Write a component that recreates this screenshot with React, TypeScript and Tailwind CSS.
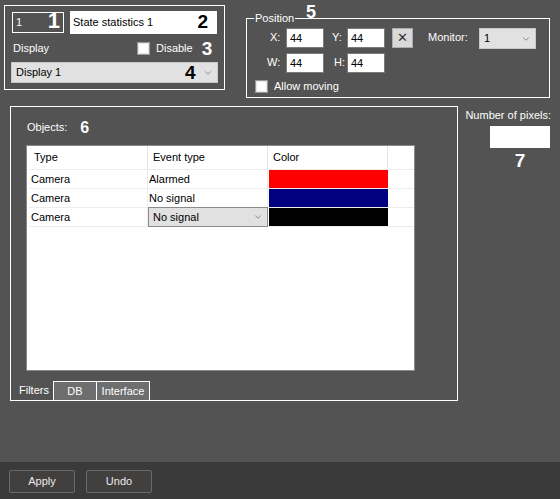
import { ChevronDown } from 'lucide-react';

const FONT = { fontFamily: '"Liberation Sans", Arial, sans-serif' };

function Chevron({ className = '' }: { className?: string }) {
  return <ChevronDown className={`w-[10px] h-[10px] text-[#555] ${className}`} strokeWidth={1.5} />;
}

function Checkbox() {
  return <span className="inline-block w-[13px] h-[13px] bg-white border border-[#9a9a9a] shadow-[inset_0_0_0_1px_#e6e6e6]" />;
}

function NumInput({ value }: { value: string }) {
  return (
    <div className="w-[38px] h-[20px] bg-white border border-[#7a7a7a] text-black pl-[3px] leading-[18px]">
      {value}
    </div>
  );
}

const rows = [
  { type: 'Camera', event: 'Alarmed', color: 'bg-[#ff0000]', editing: false },
  { type: 'Camera', event: 'No signal', color: 'bg-[#000080]', editing: false },
  { type: 'Camera', event: 'No signal', color: 'bg-black', editing: true },
];

export default function App() {
  return (
    <div style={FONT} className="w-[560px] h-[499px] bg-[#535353] text-[11px] text-white flex flex-col overflow-hidden">
      {/* top row */}
      <div className="flex items-start h-[98px]">
        {/* object box */}
        <div className="mt-[5px] ml-[4px] w-[221px] h-[85px] border border-white">
          <div className="flex items-start mt-[5px]">
            <div className="relative ml-[7px] mt-[1px] w-[52px] h-[21px] border border-white pl-[3px] leading-[18px]">
              1
              <span className="absolute right-[3px] top-[-3px] text-[22px] font-bold leading-[22px]">1</span>
            </div>
            <div className="relative ml-[6px] w-[147px] h-[23px] bg-white text-black pl-[3px] leading-[22px]">
              State statistics 1
              <span className="absolute right-[9px] top-[0px] text-[19px] font-bold leading-[22px]">2</span>
            </div>
          </div>
          <div className="flex items-center mt-[8px] h-[13px]">
            <span className="ml-[8px] w-[124px]">Display</span>
            <Checkbox />
            <span className="ml-[6px]">Disable</span>
            <span className="ml-[9px] text-[19px] font-bold leading-[13px]">3</span>
          </div>
          <div className="relative ml-[6px] mt-[7px] w-[207px] h-[21px] bg-[#e1e1e1] border border-[#c8c8c8] text-black pl-[4px] leading-[19px] flex items-center">
            <span>Display 1</span>
            <span className="absolute left-[173px] top-[0px] text-[19px] font-bold leading-[20px]">4</span>
            <Chevron className="ml-auto mr-[4px]" />
          </div>
        </div>

        {/* position box */}
        <div className="relative ml-[21px] mt-[18px] w-[304px] h-[80px] border border-white">
          <span className="absolute left-[7px] top-[-8px] px-[1px] bg-[#535353] leading-[14px]">Position</span>
          <span className="absolute left-[59px] top-[-16px] text-[18px] font-bold leading-[18px]">5</span>
          <div className="flex items-start pt-[9px]">
            <span className="ml-[23px] w-[16px] pt-[1px]">X:</span>
            <NumInput value="44" />
            <span className="ml-[8px] w-[15px] pt-[1px]">Y:</span>
            <NumInput value="44" />
            <div className="ml-[7px] w-[21px] h-[20px] bg-[#d9d9d9] border border-[#adadad] text-[#333] flex items-center justify-center text-[13px]">
              ✕
            </div>
            <span className="ml-[15px] w-[51px] pt-[1px]">Monitor:</span>
            <div className="w-[57px] h-[21px] bg-[#e1e1e1] border border-[#c8c8c8] text-black pl-[4px] flex items-center">
              <span>1</span>
              <Chevron className="ml-auto mr-[4px]" />
            </div>
          </div>
          <div className="flex items-start mt-[4px]">
            <span className="ml-[20px] w-[19px] pt-[1px]">W:</span>
            <NumInput value="44" />
            <span className="ml-[10px] w-[13px] pt-[1px]">H:</span>
            <NumInput value="44" />
          </div>
          <div className="flex items-center mt-[5px] ml-[8px]">
            <Checkbox />
            <span className="ml-[6px]">Allow moving</span>
          </div>
        </div>
      </div>

      {/* main row */}
      <div className="flex items-start mt-[8px]">
        <div className="ml-[10px] w-[448px] h-[295px] border border-white flex flex-col">
          <div className="flex items-center pl-[16px] pt-[13px] h-[28px]">
            <span>Objects:</span>
            <span className="ml-[13px] text-[16px] font-bold">6</span>
          </div>
          <div className="ml-[15px] mt-[10px] w-[389px] h-[226px] bg-white border border-[#8a8a8a] text-black">
            <div className="ml-[2px] flex h-[24px] border-b border-[#ececec]">
              <div className="w-[119px] pl-[5px] flex items-center border-r border-[#e4e4e4]">Type</div>
              <div className="w-[120px] pl-[5px] flex items-center border-r border-[#e4e4e4]">Event type</div>
              <div className="w-[120px] pl-[5px] flex items-center border-r border-[#e4e4e4]">Color</div>
            </div>
            {rows.map((r, i) => (
              <div key={i} className="ml-[2px] flex h-[19px] border-b border-[#ececec]">
                <div className="w-[119px] pl-[2px] flex items-center border-r border-[#ececec]">{r.type}</div>
                {r.editing ? (
                  <div className="w-[120px] h-[20px] -mt-[1px] bg-[#e1e1e1] border border-[#8c8c8c] pl-[4px] flex items-center">
                    <span>{r.event}</span>
                    <Chevron className="ml-auto mr-[4px]" />
                  </div>
                ) : (
                  <div className="w-[120px] pl-[1px] flex items-center border-r border-[#ececec]">{r.event}</div>
                )}
                <div className={`w-[119px] ml-[1px] ${r.color}`} />
              </div>
            ))}
          </div>
          <div className="mt-auto flex h-[19px] leading-[18px]">
            <div className="w-[42px] pl-[8px]">Filters</div>
            <div className="w-[43px] border-t border-l border-white bg-[#6e6e6e] text-center">DB</div>
            <div className="w-[54px] border-t border-l border-r border-white bg-[#6e6e6e] text-center">Interface</div>
          </div>
        </div>

        <div className="ml-[9px] flex flex-col items-end w-[84px]">
          <span className="pt-[3px] leading-[13px] whitespace-nowrap">Number of pixels:</span>
          <div className="mt-[4px] mr-[1px] w-[60px] h-[22px] bg-white" />
          <div className="mr-[1px] w-[60px] text-center text-[19px] font-bold leading-[24px] mt-[1px]">7</div>
        </div>
      </div>

      {/* bottom bar */}
      <div className="mt-auto h-[37px] bg-[#3b3a3a] flex items-start pt-[8px] pl-[9px] gap-[11px]">
        <button className="w-[66px] h-[23px] bg-[#423f3f] border border-[#6a6a6a] rounded-[2px] text-[#eaeaea] text-[11px]">Apply</button>
        <button className="w-[66px] h-[23px] bg-[#423f3f] border border-[#6a6a6a] rounded-[2px] text-[#eaeaea] text-[11px]">Undo</button>
      </div>
    </div>
  );
}
